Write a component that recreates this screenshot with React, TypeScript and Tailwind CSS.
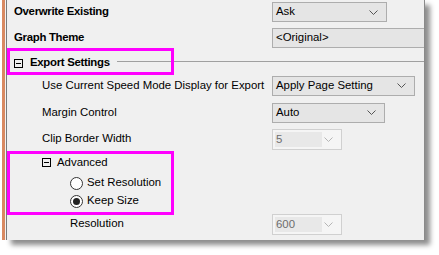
import { ReactNode } from 'react'

function Chevron({ muted }: { muted?: boolean }) {
  return (
    <svg width="9" height="5" viewBox="0 0 9 5" className="shrink-0">
      <path d="M0.5 0.5 L4.5 4.5 L8.5 0.5" fill="none" stroke={muted ? '#b5b5b5' : '#555'} strokeWidth="1" />
    </svg>
  )
}

function Combo({ value, width }: { value: string; width: string }) {
  return (
    <div className={`${width} h-[20px] flex items-center justify-between border border-[#adadad] bg-[#e5e5e5] pl-[3px] pr-[8px]`}>
      <span className="text-black">{value}</span>
      <Chevron />
    </div>
  )
}

function DisabledCombo({ value }: { value: string }) {
  return (
    <div className="w-[70px] h-[21px] flex items-center justify-between border border-[#d0d0d0] bg-[#f5f5f5] p-[2px] pr-[8px]">
      <span className="w-[47px] h-full bg-[#e8e8e8] pl-[1px] text-[#6d6d6d] leading-[15px]">{value}</span>
      <Chevron muted />
    </div>
  )
}

function MinusBox() {
  return (
    <span className="w-[9px] h-[9px] border border-black flex items-center justify-center shrink-0">
      <span className="w-[5px] h-px bg-black" />
    </span>
  )
}

function Radio({ checked }: { checked?: boolean }) {
  return (
    <span className="w-[13px] h-[13px] rounded-full border border-[#333] bg-white flex items-center justify-center shrink-0">
      {checked && <span className="w-[7px] h-[7px] rounded-full bg-[#222]" />}
    </span>
  )
}

function Row({ h, label, control }: { h: string; label: ReactNode; control?: ReactNode }) {
  return (
    <div className={`${h} flex items-center`}>
      <div className="w-[265px] shrink-0 flex items-center whitespace-nowrap">{label}</div>
      {control}
    </div>
  )
}

export default function App() {
  return (
    <div
      className="w-[439px] h-[255px] bg-white flex text-[11.4px] text-black overflow-hidden whitespace-nowrap"
      style={{ fontFamily: '"Liberation Sans", Arial, sans-serif' }}
    >
      <div className="w-[2px]" />
      <div className="w-[3px] h-[240px] bg-[#d98a62]" />
      <div className="w-[1px] h-[240px] bg-[#f4f4f4]" />
      <div className="relative w-[419px] h-[240px] bg-[#f0f0f0] border-l border-[#7a7a7a] border-r border-r-[#8a8a8a] shadow-[5px_5px_5px_rgba(0,0,0,0.45)] flex flex-col">
        <Row
          h="h-[24px]"
          label={<span className="pl-[7px] font-bold tracking-[-0.3px]">Overwrite Existing</span>}
          control={<Combo value="Ask" width="w-[115px]" />}
        />
        <Row
          h="h-[28px]"
          label={<span className="pl-[7px] font-bold tracking-[-0.3px]">Graph Theme</span>}
          control={
            <div className="flex-1 h-[20px] flex items-center border border-r-0 border-[#adadad] bg-[#e5e5e5] pl-[3px]">
              &lt;Original&gt;
            </div>
          }
        />
        <div className="h-[22px] flex items-center pl-[7px] gap-[7px]">
          <MinusBox />
          <span className="font-bold tracking-[-0.3px]">Export Settings</span>
          <span className="flex-1 h-px bg-[#a0a0a0] mb-[3px]" />
        </div>
        <Row
          h="h-[23px]"
          label={<span className="pl-[35px]">Use Current Speed Mode Display for Export</span>}
          control={<Combo value="Apply Page Setting" width="w-[143px]" />}
        />
        <Row h="h-[31px]" label={<span className="pl-[35px]">Margin Control</span>} control={<Combo value="Auto" width="w-[113px]" />} />
        <Row h="h-[22px]" label={<span className="pl-[35px]">Clip Border Width</span>} control={<DisabledCombo value="5" />} />
        <div className="h-[24px] flex items-center pl-[35px] gap-[6px] pt-[1px]">
          <MinusBox />
          <span>Advanced</span>
        </div>
        <div className="h-[18px] flex items-center pl-[63px] gap-[4px]">
          <Radio />
          <span>Set Resolution</span>
        </div>
        <div className="h-[18px] flex items-center pl-[63px] gap-[4px]">
          <Radio checked />
          <span>Keep Size</span>
        </div>
        <Row h="h-[28px]" label={<span className="pl-[63px]">Resolution</span>} control={<DisabledCombo value="600" />} />

        <div className="absolute left-0 top-[48px] w-[167px] h-[27px] border-[3px] border-[#ff00ff]" />
        <div className="absolute left-0 top-[151px] w-[167px] h-[64px] border-[3px] border-[#ff00ff]" />
      </div>
    </div>
  )
}
